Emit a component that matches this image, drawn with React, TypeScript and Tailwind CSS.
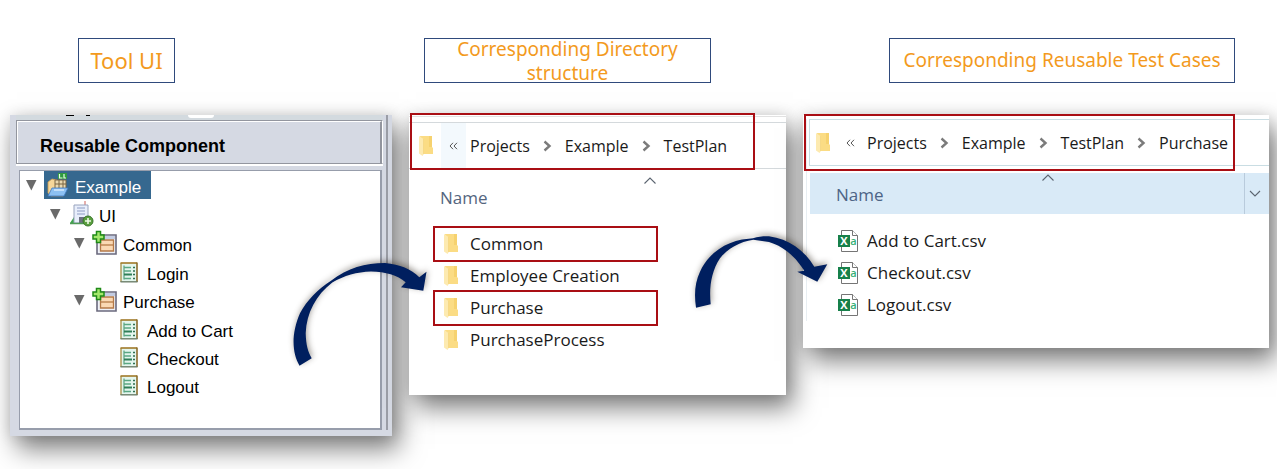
import type { ReactNode } from "react";

const explorerFont = "font-['Open_Sans','Noto_Sans',sans-serif]";

function Title({ children, className }: { children: ReactNode; className: string }) {
  return (
    <h2
      className={`flex h-[45px] items-center justify-center border border-[#2f4a7c] bg-white text-center font-['Noto_Sans',sans-serif] font-normal text-[#f39a1d] ${className}`}
    >
      {children}
    </h2>
  );
}

const panelShadow = "shadow-[7px_13px_24px_0px_rgba(0,0,0,0.5),0_0_14px_rgba(0,0,0,0.12)]";

/* ---------- tree icons ---------- */

function ProjectIcon() {
  return (
    <svg viewBox="0 0 26 26" className="h-[26px] w-[26px]" aria-hidden="true">
      <path d="M4 10l4-3 5 1v4l8 1-2 11H7L4 21z" fill="#f6d79a" stroke="#c99a4c" strokeWidth=".8" />
      <path d="M11 8h11v9H11z" fill="#ead9b0" stroke="#7a6744" strokeWidth="1" />
      <path d="M11 12h11M15 8v9M19 8v9" stroke="#7a6744" strokeWidth="1" />
      <path d="M14 1h9v6h-9z" fill="#2f9a3f" />
      <path d="M15.500 2v4h3M20 2v4h2" fill="none" stroke="#e6ffe6" strokeWidth="1.2" />
      <path d="M8 16l16 0-4 8H4z" fill="#8cc0f2" stroke="#3f78c0" strokeWidth=".8" />
      <path d="M10 18h10" stroke="#d5eafd" strokeWidth="1.5" />
    </svg>
  );
}

function SuiteIcon() {
  return (
    <svg viewBox="0 0 26 26" className="h-[26px] w-[26px]" aria-hidden="true">
      <path d="M17 0v4" stroke="#d0605a" strokeWidth="1" />
      <path d="M2 22l4-6 3 6z" fill="#3fa44d" />
      <path d="M6 4h14v18H6z" fill="#e8eefb" stroke="#98a3bd" strokeWidth="1" />
      <path d="M9 7h8M9 10h8M9 13h8" stroke="#8d9cc4" strokeWidth="1.2" />
      <path d="M11 16h6v6h-6z" fill="#6d7182" />
      <path d="M2 22.500h15" stroke="#4f9a56" strokeWidth="1.5" />
      <circle cx="20" cy="20" r="5" fill="#5aa03f" stroke="#39752a" strokeWidth="1" />
      <path d="M20 17v6M17 20h6" stroke="#f0fbe8" strokeWidth="1.600" />
    </svg>
  );
}

function ScenarioIcon() {
  return (
    <svg viewBox="0 0 26 26" className="h-[26px] w-[26px]" aria-hidden="true">
      <path d="M5 5h19v19H5z" fill="#eef1f8" stroke="#6b6a7d" strokeWidth="1.600" />
      <path d="M6 6h17v3H6z" fill="#c3cce2" />
      <path d="M8.500 10h13v11h-13z" fill="#fbd9b4" stroke="#b57a48" strokeWidth="1.300" />
      <path d="M8.500 15h13" stroke="#b57a48" strokeWidth="1.300" />
      <path d="M4.500 1.500h4V5H12v4H8.500v3.500h-4V9H1V5h3.500z" fill="#a4e86c" stroke="#1f8a17" strokeWidth="1.500" />
    </svg>
  );
}

function TestCaseIcon() {
  return (
    <svg viewBox="0 0 26 26" className="h-[26px] w-[26px]" aria-hidden="true">
      <path d="M5 4h16v19H5z" fill="#e4f6ee" />
      <path d="M5 23V4" stroke="#a58d45" strokeWidth="1.300" />
      <path d="M4.500 4H21" stroke="#a07a28" strokeWidth="1.600" />
      <path d="M21 3.500V23" stroke="#8b6c2c" strokeWidth="1.600" />
      <path d="M4.500 22.800h17" stroke="#6d7f6a" strokeWidth="1.400" />
      <path d="M8 6.500v14" stroke="#3c8c66" strokeWidth="1" />
      <path d="M8 8.500h7M8 12h7M8 19.500h7" stroke="#5aa884" strokeWidth="1.300" />
      <path d="M8 15.500h8" stroke="#2f7f58" strokeWidth="2" />
      <path d="M17 8.500h2M17 12h2M17 15.500h2M17 19.500h2" stroke="#2f6f52" strokeWidth="1.600" />
    </svg>
  );
}

/* ---------- explorer icons ---------- */

function FolderIcon() {
  return (
    <svg viewBox="0 0 14 20" className="h-5 w-[14px] shrink-0" aria-hidden="true">
      <path d="M1 0h12v11l1 1v6H4z" fill="#fbdc84" />
      <path d="M10 0h3v11h-3z" fill="#f6d26f" />
      <path d="M0 0l4.500 3v15.500L3.500 20 0 17.500z" fill="#fdeab0" />
      <path d="M4.500 3v15" stroke="#f3d480" strokeWidth=".7" />
    </svg>
  );
}

function CsvIcon() {
  return (
    <svg viewBox="0 0 20 22" className="h-[22px] w-5 shrink-0" aria-hidden="true">
      <path d="M3.500.5h11l5 5v16h-16z" fill="#fff" stroke="#757575" />
      <path d="M14.500.5v5h5" fill="#fff" stroke="#757575" />
      <path d="M0 5h12v12H0z" fill="#17804a" />
      <text x="6" y="15" textAnchor="middle" fontSize="11" fontWeight="700" fill="#fff" fontFamily="Open Sans, sans-serif">
        X
      </text>
      <text x="15.500" y="15" textAnchor="middle" fontSize="11" fontWeight="600" fill="#35b077" fontFamily="Open Sans, sans-serif">
        a
      </text>
    </svg>
  );
}

function CrumbChevron() {
  return (
    <svg viewBox="0 0 9 12" className="h-3 w-[9px] shrink-0" aria-hidden="true">
      <path d="M1.500 1.500L6.500 6l-5 4.500" fill="none" stroke="#7b7b7b" strokeWidth="2.400" />
    </svg>
  );
}

function EarlierMark() {
  return (
    <svg viewBox="0 0 9 8" className="h-2 w-[9px]" aria-hidden="true">
      <path d="M4 .8L1 4l3 3.200M8 .8L5 4l3 3.200" fill="none" stroke="#555" strokeWidth="1" />
    </svg>
  );
}

function Caret({ down = false }: { down?: boolean }) {
  return (
    <svg viewBox="0 0 12 7" className="block h-[7px] w-3" aria-hidden="true">
      <path d={down ? "M1 1l5 5 5-5" : "M.500 6.500l5.500-5.500 5.500 5.500"} fill="none" stroke="#5b6470" strokeWidth="1.100" />
    </svg>
  );
}

/* ---------- tool tree ---------- */

type TreeNode = { name: string; icon: ReactNode; selected?: boolean; children?: TreeNode[] };

const testCase = (name: string): TreeNode => ({ name, icon: <TestCaseIcon /> });

const tree: TreeNode = {
  name: "Example",
  icon: <ProjectIcon />,
  selected: true,
  children: [
    {
      name: "UI",
      icon: <SuiteIcon />,
      children: [
        { name: "Common", icon: <ScenarioIcon />, children: [testCase("Login")] },
        {
          name: "Purchase",
          icon: <ScenarioIcon />,
          children: [testCase("Add to Cart"), testCase("Checkout"), testCase("Logout")],
        },
      ],
    },
  ],
};

function TreeItem({ node }: { node: TreeNode }) {
  return (
    <li>
      <div className="flex h-7 items-center gap-[7px]">
        {node.children ? (
          <button type="button" aria-label={`Collapse ${node.name}`} className="w-3">
            <svg viewBox="0 0 12 12" className="block h-3 w-3">
              <path d="M1 1h10.500L6.300 11.500z" fill="#6a6a6a" />
            </svg>
          </button>
        ) : (
          <span className="w-3" />
        )}
        <span
          className={`flex h-7 items-center gap-[5px] pr-2.5 ${node.selected ? "bg-[#36688f] text-white" : "text-black"}`}
        >
          {node.icon}
          <span className="pt-1.5 text-[17px] leading-5">{node.name}</span>
        </span>
      </div>
      {node.children && (
        <ul className="pt-px pl-6">
          {node.children.map((child) => (
            <TreeItem key={child.name} node={child} />
          ))}
        </ul>
      )}
    </li>
  );
}

function ToolPanel() {
  return (
    <section className={`bg-[#d5d9e3] pr-1 pb-1.5 pl-1.5 font-['Liberation_Sans',Arial,sans-serif] ${panelShadow}`}>
      <div className="border-r-2 border-[#9a9da6] pr-[3px]">
        <div className="flex h-[5px] items-start bg-[#d3dadf] pl-[50px]">
          <span className="h-px w-2 bg-black" />
          <span className="ml-3 h-px w-1 bg-black" />
          <span className="ml-[98px] h-[3px] w-[26px] rounded-b bg-white" />
        </div>
        <div className="border border-[#93969f] border-r-white">
          <h3 className="flex h-[42px] items-center border-t border-r-2 border-l border-t-white border-r-[#93969f] border-l-white pt-1.5 pl-[22px] text-lg font-bold text-black">
            Reusable Component
          </h3>
        </div>
        <div className="mb-1 h-0.5 bg-white" />
        <div className="mr-px ml-[3px] h-[260px] border border-r-2 border-b-2 border-[#979dab] bg-white pl-[5px]">
          <ul>
            <TreeItem node={tree} />
          </ul>
        </div>
      </div>
    </section>
  );
}

/* ---------- explorer panels ---------- */

function Breadcrumb({ parts, highlight = false }: { parts: string[]; highlight?: boolean }) {
  return (
    <nav aria-label="Path" className="flex h-full items-center text-base text-[#1a1a1a]">
      <FolderIcon />
      <button
        type="button"
        aria-label="Earlier folders"
        className={`ml-2 flex h-full w-[25px] items-center justify-center ${highlight ? "bg-[#f3f9fd]" : ""}`}
      >
        <EarlierMark />
      </button>
      <ol className="ml-1 flex items-center gap-[13px]">
        {parts.map((part, i) => (
          <li key={part} className="flex items-center gap-[13px]">
            {i > 0 && <CrumbChevron />}
            <a href="#">{part}</a>
          </li>
        ))}
      </ol>
    </nav>
  );
}

const folders = [
  { name: "Common", marked: true },
  { name: "Employee Creation", marked: false },
  { name: "Purchase", marked: true },
  { name: "PurchaseProcess", marked: false },
];

function DirectoryPanel() {
  return (
    <section className={`relative bg-white pt-px pb-[39px] ${explorerFont} ${panelShadow}`}>
      <div className="h-1.5 border-t border-[#e2e2e2]" />
      <div className="h-[47px] border-y border-[#d4d9dc] pl-2.5">
        <Breadcrumb parts={["Projects", "Example", "TestPlan"]} highlight />
      </div>
      <span className="absolute -top-0.5 right-[31px] left-px h-[57px] border-2 border-[#a90e14]" />
      <button type="button" className="flex w-full flex-col pt-2 pl-[31px] text-left">
        <span className="ml-[204px]">
          <Caret />
        </span>
        <span className="pt-0.5 text-[17px] leading-6 text-[#54657e]">Name</span>
      </button>
      <ul className="mr-32 ml-6 pt-[18px]">
        {folders.map(({ name, marked }) => (
          <li key={name} className="relative flex h-8 items-center gap-3 pl-[11px] text-[17px] text-[#1a1a1a]">
            {marked && <span className="absolute -inset-y-0.5 inset-x-0 border-2 border-[#a90e14]" />}
            <FolderIcon />
            {name}
          </li>
        ))}
      </ul>
    </section>
  );
}

function TestCasePanel() {
  return (
    <section className={`relative bg-white pt-1 pb-[27px] pl-[3px] ${explorerFont} ${panelShadow}`}>
      <div className="border-l border-[#e8eef2] pl-0.5">
        <div className="h-[47px] border-y border-l border-[#c9dde3] pl-1.5">
          <Breadcrumb parts={["Projects", "Example", "TestPlan", "Purchase"]} />
        </div>
        <div className="mt-[7px] ml-px flex h-[41px] bg-[#d9eaf7]">
          <button type="button" className="flex flex-1 flex-col pt-px pl-[26px] text-left">
            <span className="ml-[206px]">
              <Caret />
            </span>
            <span className="pt-0.5 text-[17px] leading-6 text-[#4d6486]">Name</span>
          </button>
          <button
            type="button"
            aria-label="Column options"
            className="flex w-[25px] items-center border-l border-[#b9cbdc] pl-1"
          >
            <Caret down />
          </button>
        </div>
        <ul className="pt-[11px] pl-[29px]">
          {["Add to Cart.csv", "Checkout.csv", "Logout.csv"].map((name) => (
            <li key={name} className="flex h-8 items-center gap-[9px] text-[17px] text-[#1a1a1a]">
              <CsvIcon />
              {name}
            </li>
          ))}
        </ul>
      </div>
      <span className="absolute -top-px right-[34px] left-px h-[57px] border-2 border-[#a90e14]" />
    </section>
  );
}

/* ---------- page ---------- */

const arrowShadow = "pointer-events-none absolute drop-shadow-[1px_-2px_3px_rgba(40,30,20,0.45)]";

export default function App() {
  return (
    <main className="grid grid-cols-[382fr_377fr_466fr] items-start gap-x-[17px] overflow-hidden bg-white pt-[38px] pr-2 pb-[33px] pl-2.5">
      <div className="flex flex-col gap-8">
        <Title className="ml-[68px] w-[97px] text-[22px]">Tool UI</Title>
        <ToolPanel />
      </div>

      <div className="relative flex flex-col gap-8">
        <Title className="mr-[75px] ml-[15px] px-4 text-[19px] leading-6">
          Corresponding Directory structure
        </Title>
        <DirectoryPanel />
        <svg
          viewBox="285 255 150 120"
          className={`top-[217px] -left-[124px] h-[120px] w-[150px] ${arrowShadow}`}
          aria-hidden="true"
        >
          <path
            d="M299.500 365.700C292 353 291 334 300 313.300C307 300 318 289 331 280.700C348 268 365 263 385 263C400 264.500 411 269 419.300 277.300L426.500 271.700L423.300 290.700L401 287.300L405.700 282.300C397 275 386 272 371 271.500C357 272 344 275.500 332.300 282.500C316 295 306.500 313 305.700 333.300C306 345 308 352 311.700 358.300Z"
            fill="#001f5f"
          />
        </svg>
      </div>

      <div className="relative flex flex-col gap-8">
        <Title className="mr-[34px] ml-[86px] text-[19px]">Corresponding Reusable Test Cases</Title>
        <TestCasePanel />
        <svg
          viewBox="685 225 150 90"
          className={`top-[187px] -left-[118px] h-[90px] w-[150px] ${arrowShadow}`}
          aria-hidden="true"
        >
          <path
            d="M696 307.700C694 294 695 282 700 271.700C708 254 724 243 742 239.500L753 238.200C759 236.300 765 236 769 236.300C789 239 804 250 814.300 266.700L827.300 264.300L817.300 281.700L797.300 271.700L804.300 270.700C795 256 783 246 769 242L753.300 239.700C740 241.500 727 249 720 258.300C711 272 709 288 710.700 304.300Z"
            fill="#001f5f"
          />
        </svg>
      </div>
    </main>
  );
}
